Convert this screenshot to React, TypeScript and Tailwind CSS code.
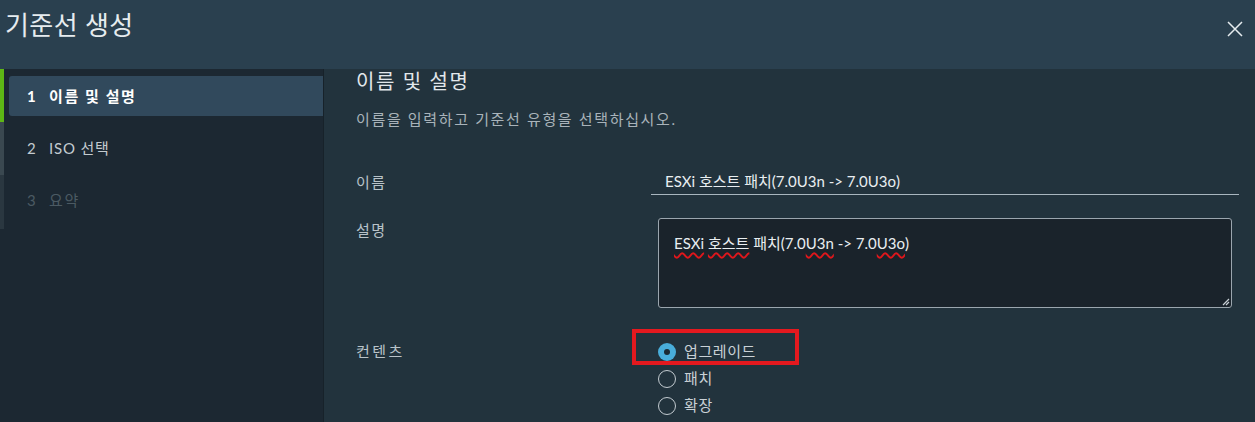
import React from "react";

const FONT = { fontFamily: 'Lato, "Noto Sans CJK KR", sans-serif' };

function Squiggle({ children }: { children: React.ReactNode }) {
  return (
    <span className="underline decoration-wavy decoration-[#e0161b] decoration-[1.5px] underline-offset-[3px]">
      {children}
    </span>
  );
}

function Radio({ label, checked }: { label: string; checked?: boolean }) {
  return (
    <label className="flex items-center gap-2 h-[27px]">
      {checked ? (
        <span className="w-[18px] h-[18px] rounded-full bg-[#49aedb] flex items-center justify-center">
          <span className="w-[6px] h-[6px] rounded-full bg-[#1b2a33]" />
        </span>
      ) : (
        <span className="w-[18px] h-[18px] rounded-full border border-[#c3cbd0]" />
      )}
      <span className="text-[15px] tracking-[0.6px] text-[#c9d1d6]">{label}</span>
    </label>
  );
}

export default function App() {
  const steps = [
    { n: 1, label: "이름 및 설명", state: "active" },
    { n: 2, label: "ISO 선택", state: "normal" },
    { n: 3, label: "요약", state: "disabled" },
  ];

  return (
    <div className="w-[1255px] h-[422px] overflow-hidden flex flex-col bg-[#22333d]" style={FONT}>
      {/* header */}
      <div className="h-[69px] shrink-0 bg-[#2a404f] flex items-start justify-between">
        <h1 className="pl-[5px] pt-[8px] text-[26px] leading-[34px] tracking-[0.4px] text-[#e6ecef]">기준선 생성</h1>
        <button className="mt-[21px] mr-[12px] text-[#e6ecef]">
          <svg width="16" height="16" viewBox="0 0 16 16" fill="none" stroke="currentColor" strokeWidth="1.5">
            <path d="M1 1L15 15M15 1L1 15" />
          </svg>
        </button>
      </div>

      <div className="flex flex-1 min-h-0">
        {/* wizard steps */}
        <aside className="w-[324px] shrink-0 flex bg-[#1c2832] border-r border-[#17222a]">
          <div className="w-[4px] flex flex-col">
            <div className="h-[53px] bg-[#5eb715]" />
            <div className="h-[53px] bg-[#3a4850]" />
            <div className="h-[54px] bg-[#2a3740]" />
          </div>
          <nav className="flex-1 pt-[7px] pl-[5px] flex flex-col gap-[12px]">
            {steps.map((s) => (
              <div
                key={s.n}
                className={`h-[40px] flex items-center pl-[18px] text-[15px] rounded-l-[3px] ${
                  s.state === "active"
                    ? "bg-[#31495c] text-white font-bold"
                    : s.state === "normal"
                    ? "text-[#c3cbd0]"
                    : "text-[#4b5a63]"
                }`}
              >
                <span className="w-[22px]">{s.n}</span>
                <span className={s.n === 2 ? "tracking-[0.8px]" : "tracking-[1.6px]"}>{s.label}</span>
              </div>
            ))}
          </nav>
        </aside>

        {/* content */}
        <main className="flex-1 pl-[32px] pr-[16px]">
          <h2 className="text-[20px] leading-[24px] tracking-[1.6px] text-[#e2e8ec]">이름 및 설명</h2>
          <p className="mt-[16px] text-[15px] leading-[20px] tracking-[1.65px] text-[#a9b3ba]">
            이름을 입력하고 기준선 유형을 선택하십시오.
          </p>

          <div className="mt-[39px] flex items-center">
            <span className="w-[295px] text-[15px] leading-[20px] tracking-[1.5px] text-[#b9c3c9]">이름</span>
            <div className="flex-1 h-[27px] border-b border-[#a9b6bf] pl-[14px] flex items-center text-[15px] text-[#e9eef1]">
              ESXi 호스트 패치(7.0U3n -&gt; 7.0U3o)
            </div>
          </div>

          <div className="mt-[23px] flex items-start">
            <span className="w-[302px] pt-[2px] text-[15px] leading-[20px] tracking-[1.5px] text-[#b9c3c9]">설명</span>
            <div className="relative w-[574px] h-[90px] bg-[#1a232b] border border-[#9ba6ae] rounded-[3px] pl-[15px] pt-[13px] text-[15px] leading-[22px] text-[#e9eef1]">
              <Squiggle>ESXi</Squiggle> <Squiggle>호스트</Squiggle> 패치(7.0<Squiggle>U3n</Squiggle> -&gt; 7.0
              <Squiggle>U3o</Squiggle>)
              <svg className="absolute right-[1px] bottom-[1px]" width="9" height="9" viewBox="0 0 9 9" stroke="#c9d1d6" strokeWidth="1.2">
                <path d="M8 2L2 8M8 5L5 8" />
              </svg>
            </div>
          </div>

          <div className="mt-[30px] flex items-start">
            <span className="w-[302px] h-[27px] flex items-center text-[15px] tracking-[2.5px] text-[#b9c3c9]">컨텐츠</span>
            <div className="relative flex flex-col">
              <Radio label="업그레이드" checked />
              <Radio label="패치" />
              <Radio label="확장" />
              <div className="absolute left-[-26px] top-[-9px] w-[167px] h-[36px] border-[4px] border-[#e4191f]" />
            </div>
          </div>
        </main>
      </div>
    </div>
  );
}
